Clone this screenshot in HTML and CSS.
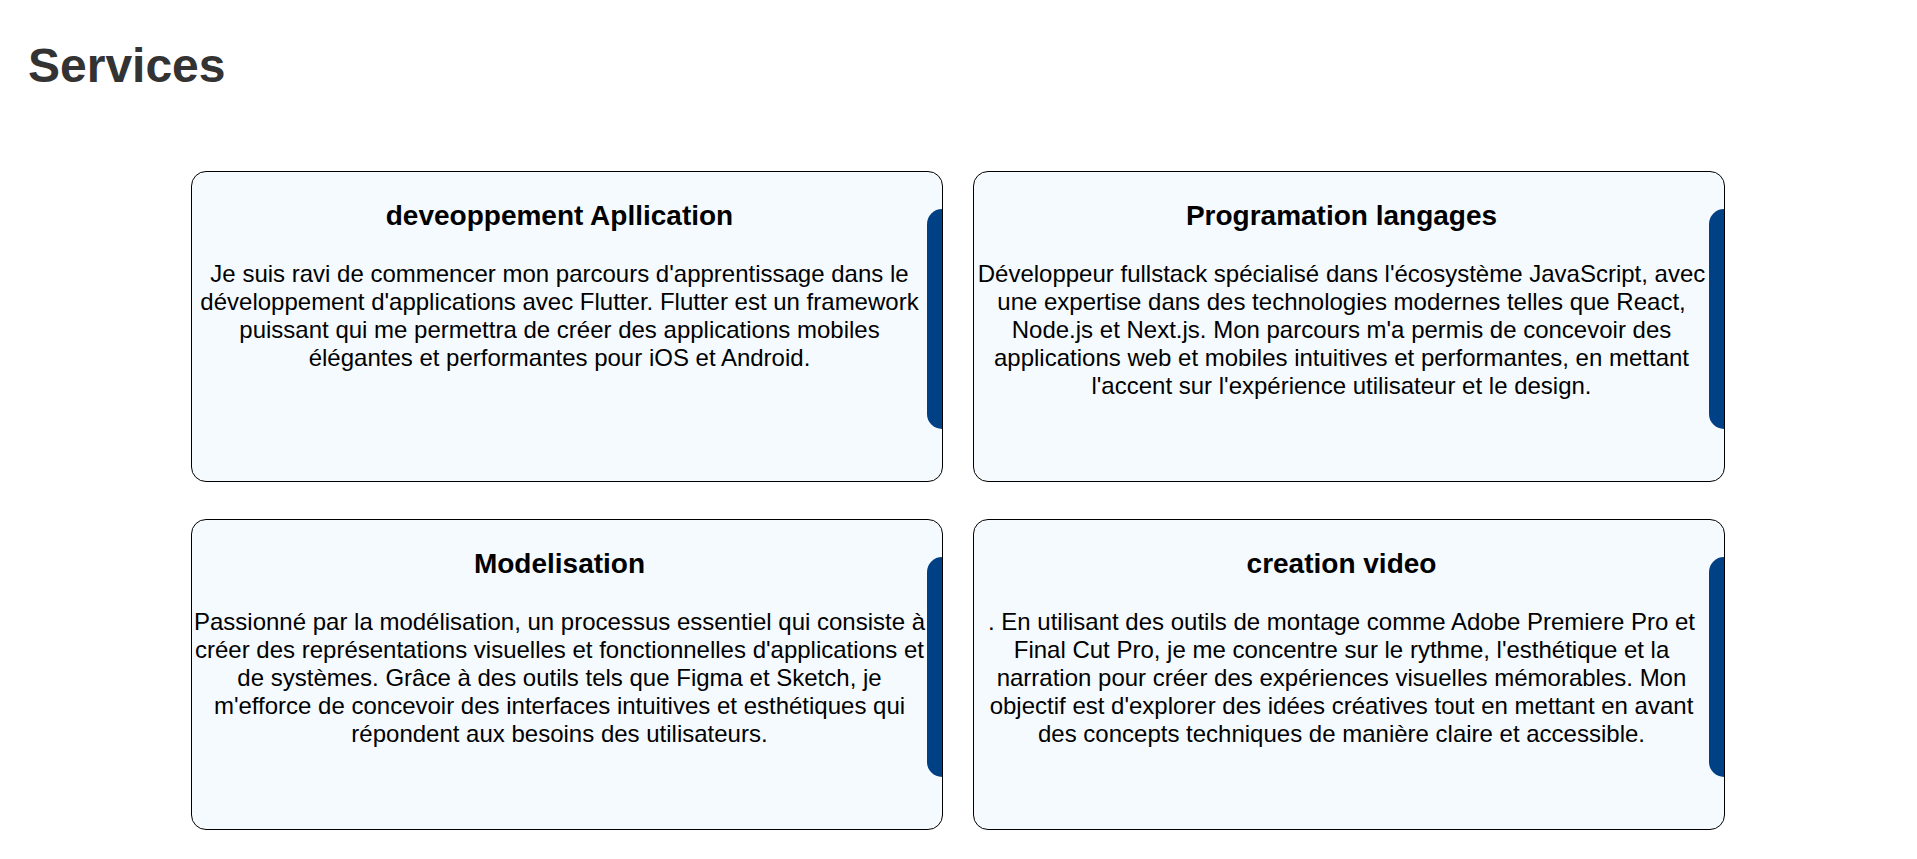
FILE: index.html
```html
<!DOCTYPE html>
<html lang="fr">
<head>
<meta charset="utf-8">
<title>Services</title>
<link rel="stylesheet" href="styles.css">
</head>
<body>
<section class="services">
  <h1 class="services-title">Services</h1>
  <div class="grid">
    <div class="card">
      <div class="card-content">
        <h3 class="card-title">deveoppement Apllication</h3>
        <p class="card-text">Je suis ravi de commencer mon parcours d'apprentissage dans le développement d'applications avec Flutter. Flutter est un framework puissant qui me permettra de créer des applications mobiles élégantes et performantes pour iOS et Android.</p>
      </div>
      <div class="card-bar"></div>
    </div>
    <div class="card">
      <div class="card-content">
        <h3 class="card-title">Programation langages</h3>
        <p class="card-text">Développeur fullstack spécialisé dans l'écosystème JavaScript, avec une expertise dans des technologies modernes telles que React, Node.js et Next.js. Mon parcours m'a permis de concevoir des applications web et mobiles intuitives et performantes, en mettant l'accent sur l'expérience utilisateur et le design.</p>
      </div>
      <div class="card-bar"></div>
    </div>
    <div class="card">
      <div class="card-content">
        <h3 class="card-title">Modelisation</h3>
        <p class="card-text">Passionné par la modélisation, un processus essentiel qui consiste à créer des représentations visuelles et fonctionnelles d'applications et de systèmes. Grâce à des outils tels que Figma et Sketch, je m'efforce de concevoir des interfaces intuitives et esthétiques qui répondent aux besoins des utilisateurs.</p>
      </div>
      <div class="card-bar"></div>
    </div>
    <div class="card">
      <div class="card-content">
        <h3 class="card-title">creation video</h3>
        <p class="card-text">. En utilisant des outils de montage comme Adobe Premiere Pro et Final Cut Pro, je me concentre sur le rythme, l'esthétique et la narration pour créer des expériences visuelles mémorables. Mon objectif est d'explorer des idées créatives tout en mettant en avant des concepts techniques de manière claire et accessible.</p>
      </div>
      <div class="card-bar"></div>
    </div>
  </div>
</section>
</body>
</html>
```

FILE: styles.css
```css
html, body {
  margin: 0;
  padding: 0;
  background: #ffffff;
}

body {
  font-family: "Liberation Sans", Arial, sans-serif;
  font-size: 24px;
  color: #000;
}

.services {
  padding: 38px 0 0 0;
}

.services-title {
  margin: 0 0 0 28px;
  font-size: 48px;
  font-weight: bold;
  color: #333333;
  line-height: normal;
}

.grid {
  display: grid;
  grid-template-columns: 752px 752px;
  column-gap: 30px;
  row-gap: 37px;
  justify-content: start;
  padding-left: 191px;
  margin-top: 78px;
}

.card {
  display: flex;
  align-items: flex-start;
  height: 311px;
  box-sizing: border-box;
  border: 1px solid #000;
  border-radius: 15px;
  background: #f5faff;
  overflow: hidden;
}

.card-content {
  flex: 1;
  text-align: center;
}

.card-title {
  margin: 28px 0 28px;
  font-size: 28px;
  font-weight: bold;
  line-height: normal;
}

.card-text {
  margin: 0;
  line-height: normal;
}

.card-bar {
  flex: 0 0 15px;
  height: 220px;
  margin-top: 37px;
  background: #004085;
  border-radius: 15px 0 0 15px;
}
```
